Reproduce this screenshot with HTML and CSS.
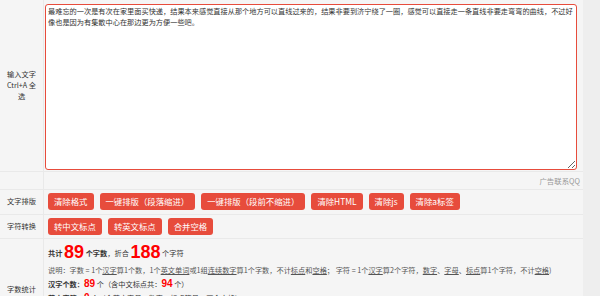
FILE: index.html
```html
<!DOCTYPE html>
<html lang="zh-CN">
<head>
    <meta charset="UTF-8">
    <title>字数统计</title>
    <link rel="stylesheet" href="styles.css">
</head>
<body>
    <div class="tool">
        <div class="row row-input">
            <div class="label">输入文字<br>Ctrl+A 全选</div>
            <div class="cell">
                <textarea id="content" class="content">最难忘的一次是有次在家里面买快递，结果本来感觉直接从那个地方可以直线过来的，结果非要到济宁绕了一圈，感觉可以直接走一条直线非要走弯弯的曲线，不过好像也是因为有集散中心在那边更为方便一些吧。</textarea>
            </div>
        </div>

        <div class="row row-ad">
            <div class="label"></div>
            <div class="cell ad">广告联系QQ</div>
        </div>

        <div class="row row-btn">
            <div class="label">文字排版</div>
            <div class="cell buttons">
                <button class="btn">清除格式</button>
                <button class="btn">一键排版（段落缩进）</button>
                <button class="btn">一键排版（段前不缩进）</button>
                <button class="btn">清除HTML</button>
                <button class="btn">清除js</button>
                <button class="btn">清除a标签</button>
            </div>
        </div>

        <div class="row row-btn">
            <div class="label">字符转换</div>
            <div class="cell buttons">
                <button class="btn">转中文标点</button>
                <button class="btn">转英文标点</button>
                <button class="btn">合并空格</button>
            </div>
        </div>

        <div class="row row-stats">
            <div class="label">字数统计</div>
            <div class="cell stats">
                <div class="total">
                    <b>共计</b> <span class="big">89</span> <b>个字数</b>，折合 <span class="big">188</span> 个字符
                </div>
                <div class="note">
                    说明：字数 = 1个<u>汉字</u>算1个数，1个<u>英文单词</u>或1组<u>连续数字</u>算1个字数，不计<u>标点</u>和<u>空格</u>； 字符 = 1个<u>汉字</u>算2个字符，<u>数字</u>、<u>字母</u>、<u>标点</u>算1个字符，不计<u>空格</u>)
                </div>
                <div class="line"><b>汉字个数：</b><span class="num">89</span> 个（含中文标点共：<span class="num">94</span> 个）</div>
                <div class="line"><b>英文字符：</b><span class="num">0</span> 个（含英文字母、数字、标点符号，不含空格）</div>
                <div class="line"><b>数字个数：</b><span class="num">0</span> 个</div>
                <div class="line"><b>标点符号：</b><span class="num">5</span> 个</div>
            </div>
        </div>
    </div>
</body>
</html>
```

FILE: styles.css
```css
body {
    margin: 0;
    background: #eeeeee;
    font-family: "Noto Sans CJK SC", "Liberation Sans", sans-serif;
    font-size: 7.2px;
    color: #333;
}

.tool {
    width: 583px;
    background: #f5f5f5;
}

.row {
    display: grid;
    grid-template-columns: 44px 1fr;
    border-bottom: 1px solid #e9e9e9;
}

.label {
    display: flex;
    align-items: center;
    justify-content: center;
    text-align: center;
    line-height: 11px;
    color: #333;
    border-right: 1px solid #e9e9e9;
    padding: 0 4px;
}

.cell {
    padding: 0 3px;
}

.row-input .cell {
    padding: 4px 6px 1px 1px;
}

.content {
    display: block;
    box-sizing: border-box;
    width: 532px;
    height: 166px;
    margin: 0;
    padding: 1px 2px;
    border: 1px solid #e74c3c;
    border-radius: 3px;
    font-family: "Noto Sans CJK SC", "Liberation Sans", sans-serif;
    font-size: 7.2px;
    line-height: 11px;
    color: #333;
    background: #fff;
    outline: none;
}

.row-ad {
    height: 17px;
}

.ad {
    text-align: right;
    color: #999;
    font-size: 7.4px;
    line-height: 17px;
}

.row-btn {
    height: 23.5px;
}

.buttons {
    display: flex;
    align-items: center;
    gap: 6px;
    padding-left: 4px;
}

.btn {
    height: 17px;
    padding: 0 6px;
    border: none;
    border-radius: 3px;
    background: #e74c3c;
    color: #fff;
    font-family: "Noto Sans CJK SC", "Liberation Sans", sans-serif;
    font-size: 8.4px;
    line-height: 17px;
    cursor: pointer;
}

.stats {
    padding: 3px 4px 6px;
}

.total {
    line-height: 20px;
}

.big {
    font-family: "Liberation Sans", sans-serif;
    font-weight: bold;
    font-size: 18px;
    color: #ff0000;
    vertical-align: -2px;
}

.note {
    line-height: 14px;
    color: #555;
    font-size: 7.2px;
}

.line {
    line-height: 14px;
}

.num {
    font-family: "Liberation Sans", sans-serif;
    font-weight: bold;
    font-size: 10px;
    color: #ff0000;
}

b {
    font-weight: bold;
}
```
